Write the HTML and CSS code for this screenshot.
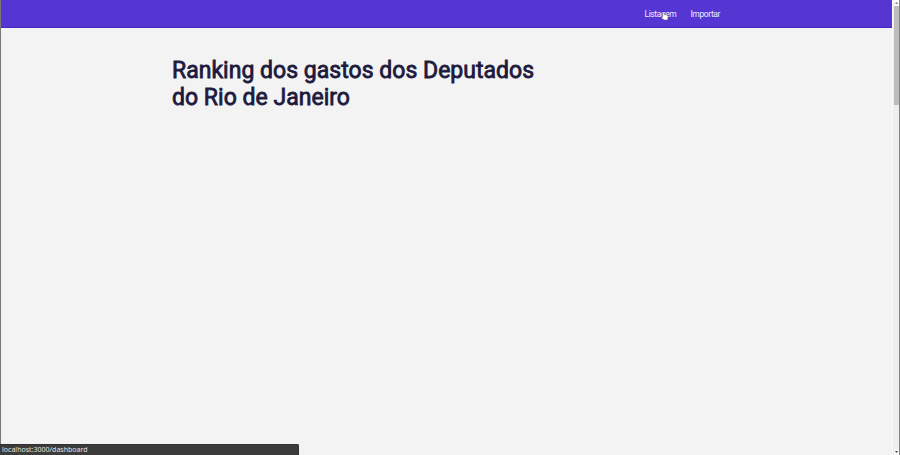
FILE: index.html
```html
<!DOCTYPE html>
<html lang="pt-BR">
<head>
<meta charset="utf-8">
<title>Ranking</title>
<link rel="stylesheet" href="styles.css">
</head>
<body>
<div class="window">
  <div class="page">
    <header class="header">
      <nav class="nav">
        <a class="link">Listagem</a>
        <a class="link">Importar</a>
      </nav>
    </header>
    <main class="main">
      <h1 class="title">Ranking dos gastos dos Deputados<br>do Rio de Janeiro</h1>
    </main>
  </div>
  <div class="scrollbar">
    <svg class="arrow" viewBox="0 0 5 6"><path d="M1 4h3L2.5 2z"/></svg>
    <div class="thumb"></div>
    <svg class="arrow arrow-down" viewBox="0 0 5 6"><path d="M1 2h3L2.5 4z"/></svg>
  </div>
</div>
<div class="status"><span class="url">localhost:3000/dashboard</span></div>
<svg class="cursor" viewBox="0 0 8 10"><path d="M1.6 1.4q.8-.9 1.5.1v2l3.4.8q.8.4.6 1.4L6.7 9H2.8L.6 6q.1-1.1 1.2-.4z"/></svg>
</body>
</html>
```
FILE: styles.css
```css
* { box-sizing: border-box; }
body { margin: 0; height: 455px; overflow: hidden; background: #f3f3f3; font-family: Roboto, sans-serif; }
.window { display: flex; height: 455px; border-left: 1px solid #777; border-right: 1px solid #858585; }
.page { flex: 1; }
.header { height: 28px; background: #5636d3; border-bottom: 1px solid #4926c4; padding: 8px 172px 0 0; }
.nav { display: flex; justify-content: flex-end; gap: 14px; }
.link { color: #eeeafc; font-size: 8.5px; line-height: 12px; letter-spacing: -.4px; }
.main { padding: 29px 0 0 171px; }
.title { margin: 0; color: #1d1a3d; font-size: 23px; line-height: 27px; font-weight: 400; letter-spacing: .02px; -webkit-text-stroke: .8px #1d1a3d; white-space: nowrap; }
.scrollbar { width: 7px; background: #eee; border-left: 1px solid #fafafa; display: flex; flex-direction: column; align-items: center; }
.arrow { width: 5px; height: 6px; fill: #777; background: #fafafa; }
.arrow-down { margin-top: auto; fill: #444; }
.thumb { width: 5px; height: 99px; background: #bcbcbc; }
.status { position: absolute; left: 0; bottom: 0; width: 299px; height: 11px; padding-left: 2px; background: #3b3b3b; border: 1px solid #303030; border-width: 1px 1px 0 0; border-radius: 0 2px 0 0; color: #e2e2e2; font: 7px/9px "Noto Sans", sans-serif; }
.url { display: block; }
.cursor { position: absolute; left: 661px; top: 11px; width: 8px; height: 10px; fill: #fff; stroke: #555; stroke-width: .5; }
```
